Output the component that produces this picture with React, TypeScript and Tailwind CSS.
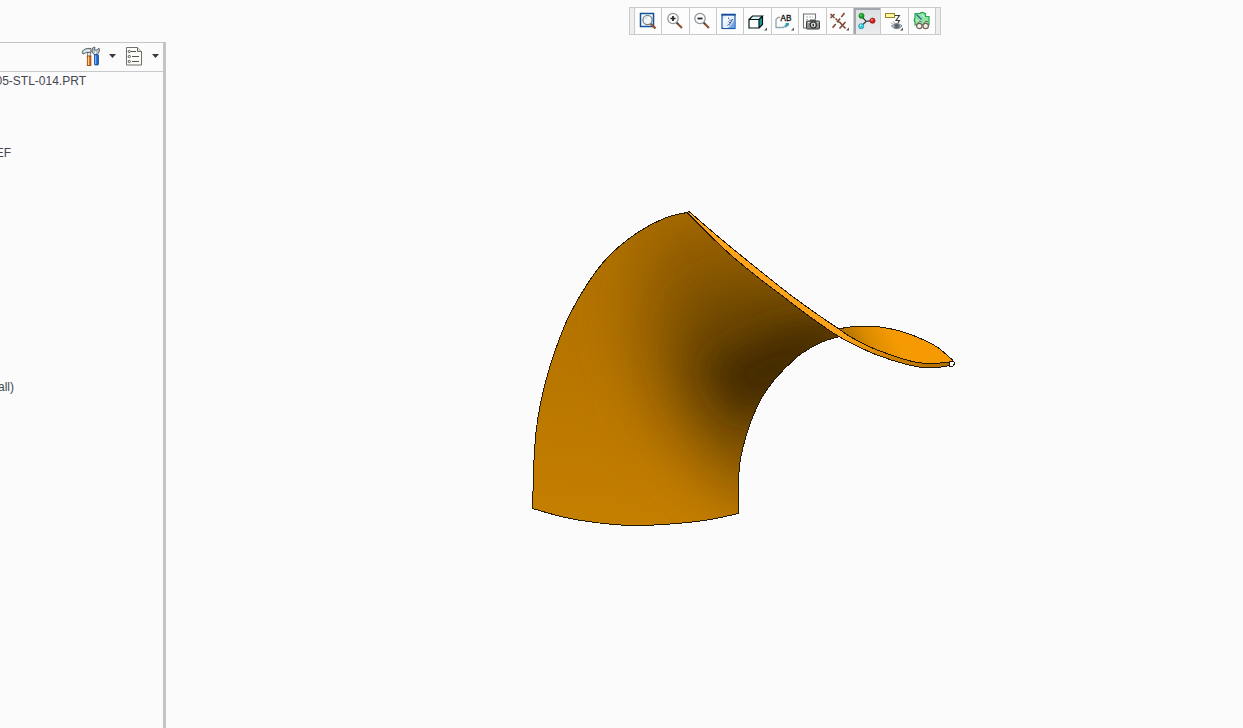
import type { ReactNode } from 'react';

type Tool = { label: string; icon: ReactNode; menu?: boolean; active?: boolean };

const Lens = ({ minus }: { minus?: boolean }) => (
  <>
    <path d="M12.5 13.5 18 19" stroke="#8f5236" strokeWidth="2.2" />
    <path d="M12.3 13.3 14 15" stroke="#444" strokeWidth="1.6" />
    <circle cx="9" cy="9.5" r="5.2" fill="#f8fafb" stroke="#8e9499" strokeWidth="1.2" />
    <path d={minus ? 'M6.5 9.5H11.5' : 'M6.5 9.5H11.5M9 7V12'} stroke="#222" strokeWidth="1.7" />
  </>
);

const tools: Tool[] = [
  {
    label: 'Refit',
    icon: (
      <>
        <rect x="4.5" y="4.5" width="13" height="13" fill="#fff" stroke="#12509a" strokeWidth="1.5" />
        <path d="M14.5 14.5 19.5 19.5" stroke="#8f5236" strokeWidth="2.4" />
        <circle cx="11.5" cy="11" r="4.6" fill="#f4f7f7" stroke="#7b8287" strokeWidth="1.3" />
        <path d="M9 10.5a2.6 2.6 0 0 1 2.5-2" stroke="#c7d0d4" />
      </>
    ),
  },
  { label: 'Zoom In', icon: <Lens /> },
  { label: 'Zoom Out', icon: <Lens minus /> },
  {
    label: 'Repaint',
    icon: (
      <>
        <defs>
          <linearGradient id="repaint" x1="0" y1="0" x2="1" y2="1">
            <stop offset="0" stopColor="#b9d5f8" />
            <stop offset=".3" stopColor="#f6faff" />
            <stop offset=".6" stopColor="#dbe9fb" />
            <stop offset="1" stopColor="#4b8be0" />
          </linearGradient>
        </defs>
        <rect x="4" y="5.5" width="13" height="14" fill="url(#repaint)" stroke="#1a55a8" strokeWidth="1.2" />
        <path d="M3.4 5.7H17.6" stroke="#114b9c" strokeWidth="1.8" />
        <path d="M16.5 10V19H10C13 17.5 15.5 14 16.5 10Z" fill="#6fa5ea" />
        <path d="M9 17.5C11 16 13 13.5 14.5 10" stroke="#33436b" />
        <path d="M10.5 8.5V10M12 10.5V12M10.5 12.5 12 14" stroke="#56678c" />
        <path d="M6 18.5C8 18.5 10 18 11 17" stroke="#fff" strokeWidth="1.2" />
      </>
    ),
  },
  {
    label: 'Display Style',
    menu: true,
    icon: (
      <>
        <path d="M3 10.5 6.5 7H16.5L13 10.5Z" fill="#d8f4f2" />
        <path d="M13 10.5 16.5 7V15.5L13 19Z" fill="#1a9a9a" />
        <rect x="3" y="10.5" width="10" height="8.5" fill="#fff" />
        <path d="M3 10.5H13V19H3ZM3 10.5 6.5 7H16.5L13 10.5M16.5 7V15.5L13 19" stroke="#061818" strokeWidth="1.2" />
      </>
    ),
  },
  {
    label: 'Saved Orientations',
    menu: true,
    icon: (
      <>
        <path d="M7 8.5H5L3 10.5V18.5H10.5L13 16" stroke="#8da8b1" strokeWidth="1.3" />
        <path d="M12.5 14H16V16L12.5 19Z" fill="#35a0ac" />
        <text x="7.5" y="12" fontFamily="Liberation Mono, monospace" fontSize="9" fill="#111" stroke="#111" strokeWidth=".3">AB</text>
      </>
    ),
  },
  {
    label: 'View Manager',
    icon: (
      <>
        <path d="M7 19H3.5V5H15.5V10" stroke="#6f7477" strokeWidth="1.1" />
        <path d="M6 8H13M6 10.5H9M6 13H7" stroke="#aaa" strokeDasharray="2 1" />
        <rect x="6.5" y="12" width="13" height="8" rx="1" fill="#8d908e" stroke="#3a3e3d" />
        <rect x="10" y="10.5" width="6" height="2" fill="#4a4e4d" />
        <circle cx="13.3" cy="16" r="3" fill="#dfe1de" stroke="#2a2d2d" strokeWidth="1.2" />
        <rect x="12.5" y="14.8" width="1.5" height="2.5" fill="#333" />
        <path d="M8 13.5H9.5M17.3 13.5H18.5" stroke="#f0f1ef" />
      </>
    ),
  },
  {
    label: 'Datum Display Filters',
    menu: true,
    icon: (
      <g stroke="#7d4a33" strokeWidth="1.6">
        <path d="M2.5 5 6.5 9M6.5 5 2.5 9" />
        <path d="M11.5 13 17.5 19.5M17.5 13 11.5 19.5" />
        <path d="M16.5 4 4 19.5" strokeDasharray="5 2" />
        <path d="M7.5 9.5 11.5 13.5" strokeDasharray="2.5 1" />
      </g>
    ),
  },
  {
    label: 'Spin Center',
    active: true,
    icon: (
      <>
        <path d="M6.5 7.5 11.3 12.3 16.5 11.7M11.3 12.3 6 17.3" stroke="#38383c" strokeWidth="1.2" />
        <circle cx="6.5" cy="6.8" r="2.6" fill="#16a52b" stroke="#096b19" strokeWidth=".6" />
        <circle cx="5.9" cy="6" r=".8" fill="#a7eda9" />
        <circle cx="17.5" cy="11.7" r="2.6" fill="#d81d1d" stroke="#8b0d0d" strokeWidth=".6" />
        <circle cx="16.9" cy="10.9" r=".8" fill="#ffc0b8" />
        <circle cx="6.2" cy="17.2" r="2.6" fill="#35cce0" stroke="#1386a0" strokeWidth=".6" />
        <circle cx="5.6" cy="16.4" r=".8" fill="#d5ffff" />
      </>
    ),
  },
  {
    label: 'Annotation Display',
    menu: true,
    icon: (
      <>
        <rect x="3.5" y="4.5" width="9" height="4" fill="#fff79a" stroke="#958428" />
        <path d="M13 6.5H17.5L14 11.5H17.5L16 14" stroke="#3c3c3c" strokeWidth="1.1" />
        <path d="M9.5 17C11.5 14 17.5 14 20 17C17.5 20.5 12 20.5 9.5 17Z" fill="#c3c8cd" stroke="#7b8389" />
        <circle cx="14.8" cy="17" r="2.6" fill="#59626b" stroke="#7f8890" />
        <path d="M10.5 15 9 13.5M12.5 14 11.5 12.5" stroke="#8b9298" />
      </>
    ),
  },
  {
    label: 'Simulate',
    icon: (
      <>
        <path d="M5 4.5H10C10 3 14.5 3 14.5 4.5H15.5V7.5H19V16H5V13C4 13 4 9 5 9Z" fill="#8fe3a6" stroke="#2aa552" strokeWidth="1.2" />
        <path d="M6.5 5.5 11.5 10.5" stroke="#2d5f90" strokeWidth="1.2" />
        <path d="M12 6 14.5 8.5M6.5 11 8.5 12" stroke="#d5f7de" />
        <circle cx="9.3" cy="17" r="2.7" fill="#f6f1ea" stroke="#75655a" strokeWidth="1.2" />
        <circle cx="15.7" cy="17" r="2.7" fill="#f6f1ea" stroke="#75655a" strokeWidth="1.2" />
        <path d="M7 15.5 9.5 12.5H11.5M13.5 15.5 15.5 12.5H18" stroke="#75655a" />
      </>
    ),
  },
];

function ToolButton({ label, icon, menu, active }: Tool) {
  return (
    <button
      type="button"
      aria-label={label}
      aria-pressed={active}
      className={
        active
          ? 'flex min-h-0 items-center justify-center border-r border-[#cacaca] bg-linear-to-b from-[#dcdfe2] to-[#e9ebed] shadow-[inset_1px_1px_0_1px_#a2a6ad]'
          : 'flex min-h-0 items-center justify-center border-r border-[#cacaca] bg-[#fdfdfd] hover:bg-[#eef3fa]'
      }
    >
      <svg viewBox="0 0 24 24" className="size-6 shrink-0" fill="none">
        {icon}
        {menu && <path d="M21 18.5V21.5H18Z" fill="#555" />}
      </svg>
    </button>
  );
}

const Caret = () => (
  <svg viewBox="0 0 7 4" className="h-1 w-[7px]">
    <path d="M0 0H7L3.5 4Z" fill="#3a3a3a" />
  </svg>
);

const rows = Array.from({ length: 18 }, (_, i) => {
  if (i === 0) return { text: '05-STL-014.PRT', width: 'w-[86px]' };
  if (i === 4) return { text: 'EF', width: 'w-[11px]' };
  if (i === 17) return { text: 'all)', width: 'w-[14px]' };
  return { text: '', width: 'w-0' };
});

function ModelTree() {
  return (
    <aside className="flex w-[166px] shrink-0 flex-col overflow-hidden border-t border-r-3 border-[#c4c4c6]">
      <div className="flex h-[29px] shrink-0 items-center justify-end border-b border-[#c9c9c9] pr-1 pb-0.5">
        <button type="button" aria-label="Settings" className="flex items-center gap-2">
          <svg viewBox="0 0 20 20" className="size-5" fill="none">
            <path d="M1 6C2.5 3 5.5 2 10 2.5V6.5H5.5L2 8Z" fill="#c3cdd0" stroke="#5e696c" />
            <path d="M3 6 6 4.5H9" stroke="#f2f8f8" />
            <rect x="6.3" y="6.5" width="3.4" height="4" fill="#dce4e4" stroke="#59625f" strokeWidth=".7" />
            <rect x="6.3" y="10" width="3.6" height="9.5" fill="#d9661c" stroke="#93400f" strokeWidth=".8" />
            <path d="M7.5 10.5V19" stroke="#ffd873" strokeWidth="1.2" />
            <path d="M11.5 2 14 1 13.5 4H16L18 2 18.5 5 16.5 8.5H13L11 6Z" fill="#b9c3c8" stroke="#606b71" />
            <path d="M14.5 5.5V8.5" stroke="#f5fafb" />
            <rect x="13.5" y="8.5" width="4" height="10.5" rx="1" fill="#2068c8" stroke="#1a478e" strokeWidth=".8" />
            <path d="M14.7 9.5V18" stroke="#8dc5ff" />
          </svg>
          <Caret />
        </button>
        <button type="button" aria-label="Show" className="ml-2 flex items-center gap-2">
          <svg viewBox="0 0 20 20" className="size-5" fill="none">
            <path d="M2.5 1.5H13.5L17.5 5.5V19H2.5Z" fill="#fdfdf8" stroke="#6f6f68" />
            <path d="M13.5 1.5V5.5H17.5" fill="#e3e3d8" stroke="#6f6f68" />
            <path d="M7 5.5H12M8 10.5H15M8 15.5H15" stroke="#55554f" />
            <circle cx="5.3" cy="5.5" r="1.1" stroke="#44443f" strokeWidth=".9" />
            <circle cx="5.3" cy="10.5" r="1.1" stroke="#44443f" strokeWidth=".9" />
            <circle cx="5.3" cy="15.5" r="1.1" stroke="#44443f" strokeWidth=".9" />
          </svg>
          <Caret />
        </button>
      </div>
      <ul className="text-xs text-[#45474f]">
        {rows.map((row, i) => (
          <li key={i} className="flex h-[18px] items-center">
            <span className={`${row.width} flex justify-end whitespace-nowrap`}>{row.text}</span>
          </li>
        ))}
      </ul>
    </aside>
  );
}

type Point = [number, number];

/** Smooth curve through every point, as SVG path commands. */
function curve(points: Point[]) {
  return points
    .map(([x, y], i) => {
      if (i === 0) return `${x} ${y}`;
      const before = points[Math.max(i - 2, 0)];
      const from = points[i - 1];
      const after = points[Math.min(i + 1, points.length - 1)];
      const c1 = [from[0] + (x - before[0]) / 6, from[1] + (y - before[1]) / 6];
      const c2 = [x - (after[0] - from[0]) / 6, y - (after[1] - from[1]) / 6];
      return `C${c1.join(' ')} ${c2.join(' ')} ${x} ${y}`;
    })
    .join('');
}

const outline = (...edges: Point[][]) => `M${edges.map(curve).join('L')}Z`;

const backEdge: Point[] = [[687, 212.5], [665, 218], [637, 233], [609, 256], [588, 283], [569, 316], [555, 351], [545, 384], [538, 417], [534.5, 450], [532.5, 508.5]];
const baseEdge: Point[] = [[532.5, 508.5], [563, 517], [595, 522.5], [632, 525.5], [670, 524], [707, 520], [738.5, 513.5]];
const innerEdge: Point[] = [[738.5, 490], [740, 462], [748, 430], [760, 401], [775, 379], [797, 357], [813, 346.5], [826, 340.5], [838, 337]];
const nearEdge: Point[] = [[687, 212.5], [710, 235.5], [733, 257], [760, 279], [787, 299.5], [813, 319], [838, 336]];
const nearEdgeEnd: Point[] = [[838, 336], [853, 344], [877, 355], [907, 364.5], [930, 368], [953, 365]];
const farEdge: Point[] = [[953, 361.5], [933, 363.5], [915, 362], [897, 357], [870, 347], [850, 336.5], [836, 327], [814, 312], [788, 293], [754, 266], [721, 239], [689, 211.5]];
const leafTop: Point[] = [[838, 329], [850, 327], [865, 326], [880, 327], [900, 331], [917, 337], [937, 347], [953, 360.5]];
const leafBottom: Point[] = [[953, 361.5], [933, 363.5], [915, 362], [897, 357], [870, 347], [850, 336.5]];

const body = outline(backEdge, baseEdge, innerEdge, [...nearEdge].reverse());
const strip = outline([...nearEdge, ...nearEdgeEnd.slice(1)], farEdge);
const leaf = outline(leafTop, leafBottom);

function Model() {
  return (
    <svg viewBox="166 42 1077 686" className="h-full w-full" role="img" aria-label="Twisted surface part" fill="none">
      <defs>
        <clipPath id="bodyClip"><path d={body} /></clipPath>
        <linearGradient id="base" gradientUnits="userSpaceOnUse" x1="640" y1="220" x2="620" y2="525">
          <stop offset="0" stopColor="#b07000" />
          <stop offset=".5" stopColor="#b87600" />
          <stop offset="1" stopColor="#c57f00" />
        </linearGradient>
        <linearGradient id="leaf" gradientUnits="userSpaceOnUse" x1="850" y1="352" x2="890" y2="330">
          <stop offset="0" stopColor="#a96c00" />
          <stop offset=".5" stopColor="#dc8c00" />
          <stop offset="1" stopColor="#f59a02" />
        </linearGradient>
        <linearGradient id="strip" gradientUnits="userSpaceOnUse" x1="690" y1="212" x2="953" y2="365">
          <stop offset="0" stopColor="#ffa51a" />
          <stop offset=".65" stopColor="#f9a21a" />
          <stop offset=".8" stopColor="#d18207" />
          <stop offset="1" stopColor="#ad6b00" />
        </linearGradient>
        <filter id="wide" x="-80%" y="-80%" width="260%" height="260%"><feGaussianBlur stdDeviation="32" /></filter>
        <filter id="mid" x="-80%" y="-80%" width="260%" height="260%"><feGaussianBlur stdDeviation="24" /></filter>
        <filter id="core" x="-80%" y="-80%" width="260%" height="260%"><feGaussianBlur stdDeviation="17" /></filter>
      </defs>
      <g clipPath="url(#bodyClip)">
        <path d={body} fill="url(#base)" />
        <path d="M655 225 740 215 880 320 800 450 775 525 715 475 660 415 632 330Z" fill="#8a5900" filter="url(#wide)" />
        <path d="M695 300 790 280 870 340 785 415 760 465 705 420 678 365Z" fill="#694400" filter="url(#mid)" />
        <path d="M706 365 770 333 850 315 840 345 780 405 738 412Z" fill="#442b00" filter="url(#core)" />
      </g>
      <g stroke="#241a0a" strokeWidth="1" strokeLinejoin="round" shapeRendering="crispEdges">
        <path d={body} />
        <path d={leaf} fill="url(#leaf)" />
        <path d={strip} fill="url(#strip)" />
        <path d="M949 361H953L955 363 953 366H949Z" fill="#fff" />
      </g>
    </svg>
  );
}

export default function App() {
  return (
    <div className="flex h-screen flex-col overflow-hidden bg-[#fbfbfb] font-['Liberation_Sans',Arial,sans-serif]">
      <header className="flex h-[42px] shrink-0 items-center">
        <div className="grow-[629]" />
        <div role="toolbar" aria-label="Graphics" className="flex h-7 w-[312px] border border-[#cacaca] bg-[#eeeeee]">
          <div className="w-1 shrink-0" />
          <div className="grid h-full grow grid-cols-11 border-l border-[#cacaca]">
            {tools.map((tool) => (
              <ToolButton key={tool.label} {...tool} />
            ))}
          </div>
          <div className="w-1 shrink-0" />
        </div>
        <div className="grow-[302]" />
      </header>
      <div className="flex min-h-0 grow">
        <ModelTree />
        <main className="min-w-0 grow">
          <Model />
        </main>
      </div>
    </div>
  );
}
